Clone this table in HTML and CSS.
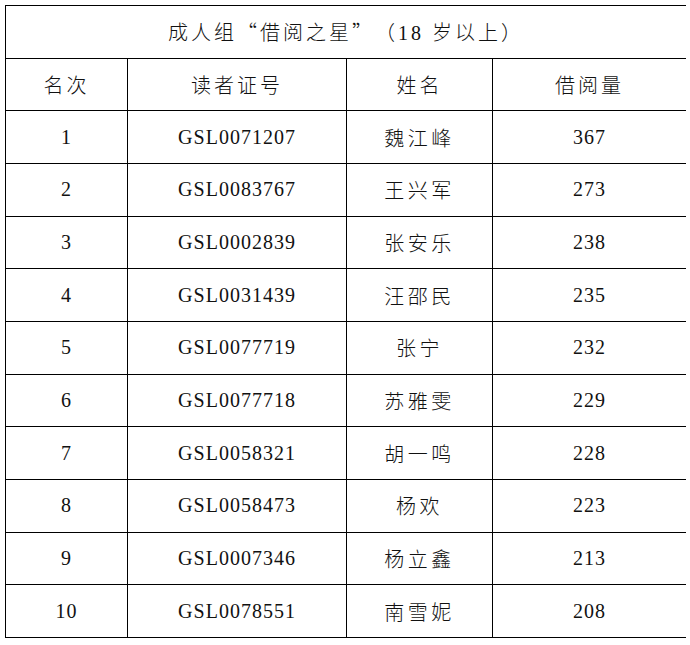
FILE: index.html
```html
<!DOCTYPE html>
<html lang="zh-CN">
<head>
<meta charset="utf-8">
<link rel="stylesheet" href="styles.css">
</head>
<body>
<div class="board">
  <div class="cell title">成人组<span class="cjk">“</span>借阅之星<span class="cjk">”（</span>18 岁以上<span class="cjk">）</span></div>
  <div class="cell head">名次</div>
  <div class="cell head">读者证号</div>
  <div class="cell head">姓名</div>
  <div class="cell head">借阅量</div>

  <div class="cell num">1</div><div class="cell num">GSL0071207</div><div class="cell name">魏江峰</div><div class="cell num">367</div>
  <div class="cell num">2</div><div class="cell num">GSL0083767</div><div class="cell name">王兴军</div><div class="cell num">273</div>
  <div class="cell num">3</div><div class="cell num">GSL0002839</div><div class="cell name">张安乐</div><div class="cell num">238</div>
  <div class="cell num">4</div><div class="cell num">GSL0031439</div><div class="cell name">汪邵民</div><div class="cell num">235</div>
  <div class="cell num">5</div><div class="cell num">GSL0077719</div><div class="cell name">张宁</div><div class="cell num">232</div>
  <div class="cell num">6</div><div class="cell num">GSL0077718</div><div class="cell name">苏雅雯</div><div class="cell num">229</div>
  <div class="cell num">7</div><div class="cell num">GSL0058321</div><div class="cell name">胡一鸣</div><div class="cell num">228</div>
  <div class="cell num">8</div><div class="cell num">GSL0058473</div><div class="cell name">杨欢</div><div class="cell num">223</div>
  <div class="cell num">9</div><div class="cell num">GSL0007346</div><div class="cell name">杨立鑫</div><div class="cell num">213</div>
  <div class="cell num">10</div><div class="cell num">GSL0078551</div><div class="cell name">南雪妮</div><div class="cell num">208</div>
</div>
</body>
</html>
```
FILE: styles.css
```css
html, body {
  margin: 0;
  padding: 0;
  background: #fff;
}
body {
  padding: 5px 0 0 5px;
  font-family: "Liberation Serif", "Noto Sans CJK SC", serif;
  font-size: 20px;
  font-weight: 300;
  color: #111;
}
.board {
  display: grid;
  width: 681px;
  box-sizing: border-box;
  grid-template-columns: 121px 218px 145px 193px;
  grid-template-rows: repeat(12, 51.67px);
  gap: 1px;
  padding: 1px;
  background: #000;
}
.cell {
  background: #fff;
  display: flex;
  align-items: center;
  justify-content: center;
  white-space: nowrap;
}
.title {
  grid-column: 1 / -1;
  letter-spacing: 3px;
  text-spacing-trim: space-all;
}
.cjk {
  font-family: "Noto Sans CJK SC", sans-serif;
}
.head {
  letter-spacing: 3px;
}
.name {
  letter-spacing: 3.5px;
}
.num {
  letter-spacing: 1px;
}
```
